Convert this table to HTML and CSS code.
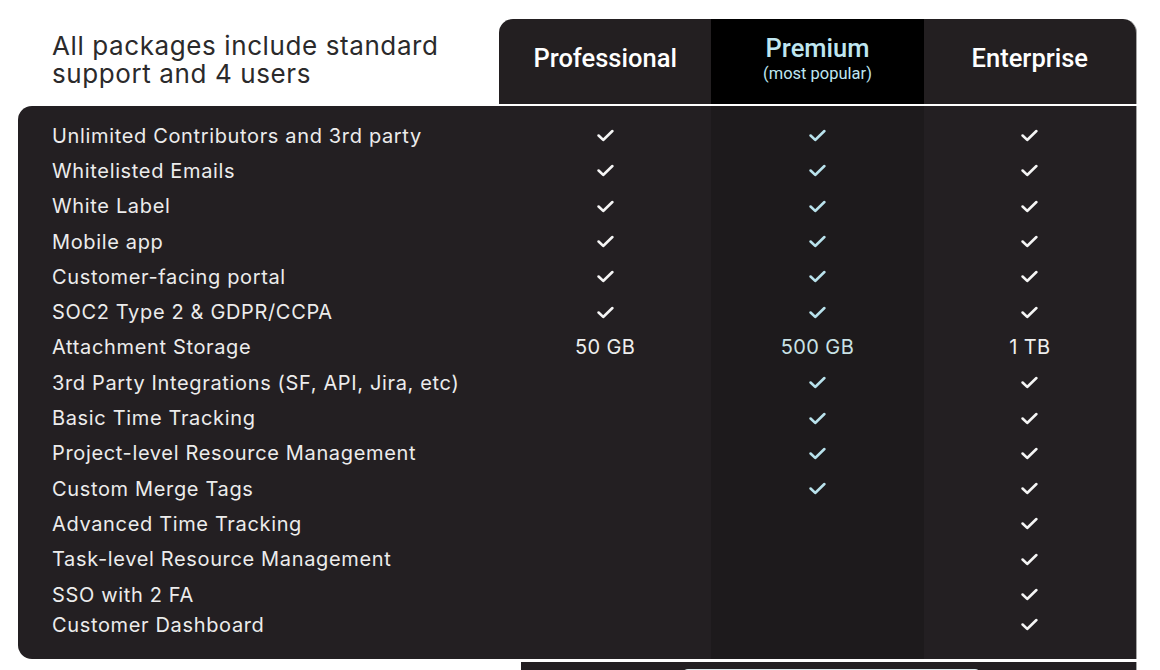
FILE: index.html
```html
<!DOCTYPE html>
<html>
<head>
<meta charset="utf-8">
<link rel="stylesheet" href="styles.css">
</head>
<body>
<div class="page">
  <div class="top">
    <h1 class="title">All packages include standard<br>support and 4 users</h1>
    <div class="plans">
      <div class="plan">Professional</div>
      <div class="plan premium"><span class="pname">Premium</span><span class="psub">(most popular)</span></div>
      <div class="plan">Enterprise</div>
    </div>
  </div>
  <div class="table">
    <div class="col labels">
      <div class="cell">Unlimited Contributors and 3rd party</div>
      <div class="cell">Whitelisted Emails</div>
      <div class="cell">White Label</div>
      <div class="cell">Mobile app</div>
      <div class="cell">Customer-facing portal</div>
      <div class="cell">SOC2 Type 2 &amp; GDPR/CCPA</div>
      <div class="cell">Attachment Storage</div>
      <div class="cell">3rd Party Integrations (SF, API, Jira, etc)</div>
      <div class="cell">Basic Time Tracking</div>
      <div class="cell">Project-level Resource Management</div>
      <div class="cell">Custom Merge Tags</div>
      <div class="cell">Advanced Time Tracking</div>
      <div class="cell">Task-level Resource Management</div>
      <div class="cell">SSO with 2 FA</div>
      <div class="cell">Customer Dashboard</div>
    </div>
    <div class="col plan-col">
      <div class="cell"><svg class="check" viewBox="0 0 16 12"><polyline points="1.5,6 5.8,10.2 14.5,1.8"/></svg></div>
      <div class="cell"><svg class="check" viewBox="0 0 16 12"><polyline points="1.5,6 5.8,10.2 14.5,1.8"/></svg></div>
      <div class="cell"><svg class="check" viewBox="0 0 16 12"><polyline points="1.5,6 5.8,10.2 14.5,1.8"/></svg></div>
      <div class="cell"><svg class="check" viewBox="0 0 16 12"><polyline points="1.5,6 5.8,10.2 14.5,1.8"/></svg></div>
      <div class="cell"><svg class="check" viewBox="0 0 16 12"><polyline points="1.5,6 5.8,10.2 14.5,1.8"/></svg></div>
      <div class="cell"><svg class="check" viewBox="0 0 16 12"><polyline points="1.5,6 5.8,10.2 14.5,1.8"/></svg></div>
      <div class="cell val">50 GB</div>
      <div class="cell"></div>
      <div class="cell"></div>
      <div class="cell"></div>
      <div class="cell"></div>
      <div class="cell"></div>
      <div class="cell"></div>
      <div class="cell"></div>
      <div class="cell"></div>
    </div>
    <div class="col plan-col premium-col">
      <div class="cell"><svg class="check" viewBox="0 0 16 12"><polyline points="1.5,6 5.8,10.2 14.5,1.8"/></svg></div>
      <div class="cell"><svg class="check" viewBox="0 0 16 12"><polyline points="1.5,6 5.8,10.2 14.5,1.8"/></svg></div>
      <div class="cell"><svg class="check" viewBox="0 0 16 12"><polyline points="1.5,6 5.8,10.2 14.5,1.8"/></svg></div>
      <div class="cell"><svg class="check" viewBox="0 0 16 12"><polyline points="1.5,6 5.8,10.2 14.5,1.8"/></svg></div>
      <div class="cell"><svg class="check" viewBox="0 0 16 12"><polyline points="1.5,6 5.8,10.2 14.5,1.8"/></svg></div>
      <div class="cell"><svg class="check" viewBox="0 0 16 12"><polyline points="1.5,6 5.8,10.2 14.5,1.8"/></svg></div>
      <div class="cell val">500 GB</div>
      <div class="cell"><svg class="check" viewBox="0 0 16 12"><polyline points="1.5,6 5.8,10.2 14.5,1.8"/></svg></div>
      <div class="cell"><svg class="check" viewBox="0 0 16 12"><polyline points="1.5,6 5.8,10.2 14.5,1.8"/></svg></div>
      <div class="cell"><svg class="check" viewBox="0 0 16 12"><polyline points="1.5,6 5.8,10.2 14.5,1.8"/></svg></div>
      <div class="cell"><svg class="check" viewBox="0 0 16 12"><polyline points="1.5,6 5.8,10.2 14.5,1.8"/></svg></div>
      <div class="cell"></div>
      <div class="cell"></div>
      <div class="cell"></div>
      <div class="cell"></div>
    </div>
    <div class="col plan-col">
      <div class="cell"><svg class="check" viewBox="0 0 16 12"><polyline points="1.5,6 5.8,10.2 14.5,1.8"/></svg></div>
      <div class="cell"><svg class="check" viewBox="0 0 16 12"><polyline points="1.5,6 5.8,10.2 14.5,1.8"/></svg></div>
      <div class="cell"><svg class="check" viewBox="0 0 16 12"><polyline points="1.5,6 5.8,10.2 14.5,1.8"/></svg></div>
      <div class="cell"><svg class="check" viewBox="0 0 16 12"><polyline points="1.5,6 5.8,10.2 14.5,1.8"/></svg></div>
      <div class="cell"><svg class="check" viewBox="0 0 16 12"><polyline points="1.5,6 5.8,10.2 14.5,1.8"/></svg></div>
      <div class="cell"><svg class="check" viewBox="0 0 16 12"><polyline points="1.5,6 5.8,10.2 14.5,1.8"/></svg></div>
      <div class="cell val">1 TB</div>
      <div class="cell"><svg class="check" viewBox="0 0 16 12"><polyline points="1.5,6 5.8,10.2 14.5,1.8"/></svg></div>
      <div class="cell"><svg class="check" viewBox="0 0 16 12"><polyline points="1.5,6 5.8,10.2 14.5,1.8"/></svg></div>
      <div class="cell"><svg class="check" viewBox="0 0 16 12"><polyline points="1.5,6 5.8,10.2 14.5,1.8"/></svg></div>
      <div class="cell"><svg class="check" viewBox="0 0 16 12"><polyline points="1.5,6 5.8,10.2 14.5,1.8"/></svg></div>
      <div class="cell"><svg class="check" viewBox="0 0 16 12"><polyline points="1.5,6 5.8,10.2 14.5,1.8"/></svg></div>
      <div class="cell"><svg class="check" viewBox="0 0 16 12"><polyline points="1.5,6 5.8,10.2 14.5,1.8"/></svg></div>
      <div class="cell"><svg class="check" viewBox="0 0 16 12"><polyline points="1.5,6 5.8,10.2 14.5,1.8"/></svg></div>
      <div class="cell"><svg class="check" viewBox="0 0 16 12"><polyline points="1.5,6 5.8,10.2 14.5,1.8"/></svg></div>
    </div>
  </div>
  <div class="bottom"><div class="pill"></div></div>
</div>
</body>
</html>
```
FILE: styles.css
```css
* { box-sizing: border-box; }
html, body { margin: 0; padding: 0; background: #ffffff; }
body { width: 1160px; height: 670px; overflow: hidden; font-family: "Inter", "Liberation Sans", sans-serif; }
.page { padding: 19px 0 0 18px; }
.top { display: flex; height: 85px; }
.title {
  flex: 0 0 481px;
  margin: 0;
  padding: 13px 0 0 34px;
  font-family: "Inter", sans-serif;
  font-weight: 400;
  font-size: 26px;
  line-height: 28px;
  color: #2b2a2b;
  letter-spacing: 0.6px;
  white-space: nowrap;
}
.plans {
  display: flex;
  flex: 0 0 638px;
  border-radius: 14px 14px 0 0;
  overflow: hidden;
  background: #231f21;
  border-right: 1px solid #a5a5a5;
}
.plan {
  flex: 1;
  display: flex;
  flex-direction: column;
  align-items: center;
  justify-content: center;
  font-family: "Roboto", sans-serif;
  font-weight: 500;
  font-size: 25.5px;
  color: #ffffff;
  padding-bottom: 7px;
}
.plan.premium { background: #000000; justify-content: flex-start; padding: 14px 0 0; }
.pname { color: #bfe6f0; line-height: 30px; }
.psub { color: #bfe6f0; font-size: 16.5px; font-weight: 400; line-height: 22px; }
.table {
  display: flex;
  width: 1119px;
  height: 553px;
  margin-top: 2px;
  background: #231f22;
  border-radius: 14px 0 0 14px;
  border-right: 1px solid #a5a5a5;
  padding: 12px 0 21px 0;
}
.col { display: flex; flex-direction: column; }
.labels { width: 481px; padding-left: 34px; }
.plan-col { width: 212.4px; align-items: center; }
.premium-col { background: #1d1a1c; margin: -12px 0 -21px; padding: 12px 0 21px; }
.cell {
  height: 35.3px;
  display: flex;
  align-items: center;
  font-size: 20px;
  color: #ececec;
  letter-spacing: 0.65px;
  white-space: nowrap;
}
.cell:last-child { height: 25px; }
.val { color: #eeeeee; letter-spacing: 0.4px; }
.premium-col .val { color: #c9e2e6; }
.check { width: 17px; height: 13px; }
.check polyline { fill: none; stroke: #f5f5f5; stroke-width: 2.4; stroke-linecap: round; stroke-linejoin: round; }
.premium-col .check polyline { stroke: #b9e2ec; }
.bottom {
  margin: 3px 0 0 503px;
  width: 616px;
  height: 20px;
  background: #231f22;
  border-right: 1px solid #a5a5a5;
  padding: 7px 0 0 161px;
}
.pill { width: 299px; height: 12px; background: #dcebee; border-radius: 6px 6px 0 0; }
```
